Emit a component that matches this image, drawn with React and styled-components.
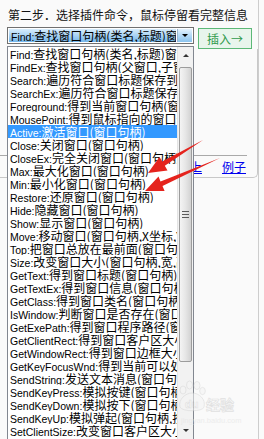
import React from 'react';
import styled, { createGlobalStyle } from 'styled-components';

const GlobalStyle = createGlobalStyle`
  html, body {
    margin: 0;
    padding: 0;
    background: #fafafa;
  }
  body {
    font-family: "Liberation Sans", "Noto Sans CJK SC", sans-serif;
  }
`;

const Page = styled.div`
  position: relative;
  width: 264px;
  height: 439px;
  overflow: hidden;
  background: #fafafa;
`;

const Frame = styled.div`
  width: 259px;
  height: 100%;
  box-sizing: border-box;
  border-right: 1px solid #cdcdcd;
  padding-top: 8px;
`;

const Heading = styled.div`
  margin-left: 8px;
  font: 12px/14px "Noto Sans CJK SC", sans-serif;
  color: #111;
  white-space: nowrap;
`;

const Toolbar = styled.div`
  display: flex;
  align-items: flex-start;
  gap: 4px;
  margin-top: 5px;
  padding-left: 7px;
`;

const ComboWrap = styled.div`
  position: relative;
  width: 187px;
`;

const Combo = styled.div`
  display: flex;
  height: 17px;
  box-sizing: border-box;
  border: 1px solid #707070;
  background: #fff;
`;

const ComboValue = styled.div`
  flex: 1;
  margin: 1px 0 1px 1px;
  padding-left: 2px;
  background: linear-gradient(#d8edfc, #a9d3f4 50%, #74b7ec);
  overflow: hidden;
  white-space: nowrap;
  line-height: 13px;
`;

const ComboButton = styled.div`
  width: 14px;
  margin: 1px;
  display: flex;
  align-items: center;
  justify-content: center;
  background: linear-gradient(#e4f2fd, #b4d9f6 50%, #8cc4ef);
  border-left: 1px solid #9cb8d0;
`;

const Triangle = styled.span`
  width: 0;
  height: 0;
  border-left: ${p => p.$size}px solid transparent;
  border-right: ${p => p.$size}px solid transparent;
  ${p => (p.$up ? 'border-bottom' : 'border-top')}: ${p => p.$size}px solid ${p => p.$color || '#000'};
`;

const Name = styled.span`
  font-family: "Liberation Sans", sans-serif;
  font-size: 10.5px;
`;

const Desc = styled.span`
  font-family: "Noto Sans CJK SC", sans-serif;
  font-size: 12px;
`;

const InsertButton = styled.button`
  width: 54px;
  height: 21px;
  margin-top: 1px;
  padding: 0;
  box-sizing: border-box;
  border: 1px solid #5cb877;
  background: #e8f5ec;
  color: #2f9a4c;
  font: 12px/19px "Noto Sans CJK SC", sans-serif;
`;

const Dropdown = styled.div`
  position: absolute;
  top: 19px;
  left: 0;
  z-index: 2;
  width: 187px;
  height: 394px;
  box-sizing: border-box;
  border: 1px solid #828790;
  background: #fff;
  display: grid;
  grid-template-columns: 1fr 16px;
  overflow: hidden;
`;

const Items = styled.div`
  overflow: hidden;
`;

const Row = styled.div`
  height: 13px;
  line-height: 13px;
  padding-left: 2px;
  white-space: nowrap;
  overflow: hidden;
  color: ${p => (p.$active ? '#fff' : '#000')};
  background: ${p => (p.$active ? '#3399ff' : 'transparent')};
`;

const Scrollbar = styled.div`
  display: flex;
  flex-direction: column;
  background: #f2f2f2;
  border-left: 1px solid #e4e4e4;
`;

const ScrollArrow = styled.div`
  height: 17px;
  flex: none;
  display: flex;
  align-items: center;
  justify-content: center;
`;

const Track = styled.div`
  flex: 1;
  padding-top: 3px;
`;

const Thumb = styled.div`
  height: 295px;
  margin: 0 1px;
  box-sizing: border-box;
  border: 1px solid #9c9c9c;
  border-radius: 2px;
  background: linear-gradient(90deg, #f4f4f4, #e6e6e6 50%, #d2d2d2);
  display: flex;
  align-items: center;
  justify-content: center;
`;

const Grip = styled.div`
  width: 7px;
  height: 7px;
  background: repeating-linear-gradient(#5a5a5a 0 1px, transparent 1px 3px);
`;

const Panel = styled.div`
  width: 258px;
  box-sizing: border-box;
  padding-top: 106px;
  border-right: 1px solid #c8c8c8;
  border-bottom: 1px solid #c8c8c8;
  border-bottom-right-radius: 5px;
`;

const Separator = styled.div`
  width: 247px;
  border-top: 1px solid #a9a9a9;
`;

const LinkRow = styled.div`
  height: 21px;
  display: flex;
  justify-content: flex-end;
  align-items: center;
  gap: 20px;
  padding-right: 11px;
`;

const Link = styled.a`
  color: #0000ee;
  text-decoration: underline;
  font: 12px/14px "Noto Sans CJK SC", sans-serif;
`;

const Overlay = styled.svg`
  position: absolute;
  left: 0;
  top: 0;
  z-index: 3;
  pointer-events: none;
`;

const commands = [
  ['Find', '查找窗口句柄(类名,标题)窗口句柄'],
  ['FindEx', '查找窗口句柄(父窗口,子窗口,类名,标题)'],
  ['Search', '遍历符合窗口标题保存到数组'],
  ['SearchEx', '遍历符合窗口标题保存到数组'],
  ['Foreground', '得到当前窗口句柄(窗口句柄)'],
  ['MousePoint', '得到鼠标指向的窗口句柄'],
  ['Active', '激活窗口(窗口句柄)'],
  ['Close', '关闭窗口(窗口句柄)'],
  ['CloseEx', '完全关闭窗口(窗口句柄)'],
  ['Max', '最大化窗口(窗口句柄)'],
  ['Min', '最小化窗口(窗口句柄)'],
  ['Restore', '还原窗口(窗口句柄)'],
  ['Hide', '隐藏窗口(窗口句柄)'],
  ['Show', '显示窗口(窗口句柄)'],
  ['Move', '移动窗口(窗口句柄,X坐标,Y坐标)'],
  ['Top', '把窗口总放在最前面(窗口句柄)'],
  ['Size', '改变窗口大小(窗口句柄,宽,高)'],
  ['GetText', '得到窗口标题(窗口句柄)'],
  ['GetTextEx', '得到窗口信息(窗口句柄)'],
  ['GetClass', '得到窗口类名(窗口句柄)'],
  ['IsWindow', '判断窗口是否存在(窗口句柄)'],
  ['GetExePath', '得到窗口程序路径(窗口句柄)'],
  ['GetClientRect', '得到窗口客户区大小(窗口句柄)'],
  ['GetWindowRect', '得到窗口边框大小(窗口句柄)'],
  ['GetKeyFocusWnd', '得到当前可以处理按键的窗口'],
  ['SendString', '发送文本消息(窗口句柄,文本)'],
  ['SendKeyPress', '模拟按键(窗口句柄,按键码)'],
  ['SendKeyDown', '模拟按下(窗口句柄,按键码)'],
  ['SendKeyUp', '模拟弹起(窗口句柄,按键码)'],
  ['SetClientSize', '改变窗口客户区大小(窗口句柄)'],
];

const Arrows = () => (
  <g fill="#e5231d">
    <polygon points="203,140 164.8,165.8 167.5,170.5 148,173 159.5,157 162.2,161.6" />
    <polygon points="220,158 162.5,186 164.6,191 145,191 158.5,176.5 160.5,181.4" />
  </g>
);

const Watermark = () => (
  <g opacity="0.55">
    <g fill="#f4f4f4" stroke="#d2d2d2" strokeWidth="0.8">
      <ellipse cx="183" cy="390" rx="3" ry="4" />
      <ellipse cx="189.5" cy="385" rx="3" ry="4" />
      <ellipse cx="197" cy="385.5" rx="3" ry="4" />
      <ellipse cx="202.5" cy="391" rx="2.8" ry="3.6" />
      <path d="M180,407 C178,399 186,393 192,393 C199,393 206,399 204,407 C203,412 182,412 180,407 Z" />
    </g>
    <text x="185" y="408" fontFamily="Liberation Sans, sans-serif" fontWeight="bold" fontSize="11" fill="#fff" stroke="#cfcfcf" strokeWidth="0.6">du</text>
    <text x="206" y="410" fontFamily="Noto Sans CJK SC, sans-serif" fontWeight="bold" fontSize="14" fill="#f6f6f6" stroke="#cdcdcd" strokeWidth="0.7">经验</text>
    <text x="181" y="423" fontFamily="Liberation Sans, sans-serif" fontSize="7.5" fill="#e2e2e2">jingyan.baidu.com</text>
  </g>
);

export default function App() {
  return (
    <Page>
      <GlobalStyle />
      <Frame>
        <Heading>第二步．选择插件命令，鼠标停留看完整信息</Heading>
        <Toolbar>
          <ComboWrap>
            <Combo>
              <ComboValue>
                <Name>Find:</Name>
                <Desc>查找窗口句柄(类名,标题)窗口句柄</Desc>
              </ComboValue>
              <ComboButton>
                <Triangle $size={3.5} />
              </ComboButton>
            </Combo>
            <Dropdown>
              <Items>
                {commands.map(([name, desc]) => (
                  <Row key={name} $active={name === 'Active'}>
                    <Name>{name}:</Name>
                    <Desc>{desc}</Desc>
                  </Row>
                ))}
              </Items>
              <Scrollbar>
                <ScrollArrow>
                  <Triangle $up $size={3} $color="#333" />
                </ScrollArrow>
                <Track>
                  <Thumb>
                    <Grip />
                  </Thumb>
                </Track>
                <ScrollArrow>
                  <Triangle $size={3} $color="#333" />
                </ScrollArrow>
              </Scrollbar>
            </Dropdown>
          </ComboWrap>
          <InsertButton>插入→</InsertButton>
        </Toolbar>
        <Panel>
          <Separator />
          <LinkRow>
            <Link href="#">向上</Link>
            <Link href="#">例子</Link>
          </LinkRow>
        </Panel>
      </Frame>
      <Overlay width="264" height="439" viewBox="0 0 264 439">
        <Arrows />
        <Watermark />
      </Overlay>
    </Page>
  );
}
